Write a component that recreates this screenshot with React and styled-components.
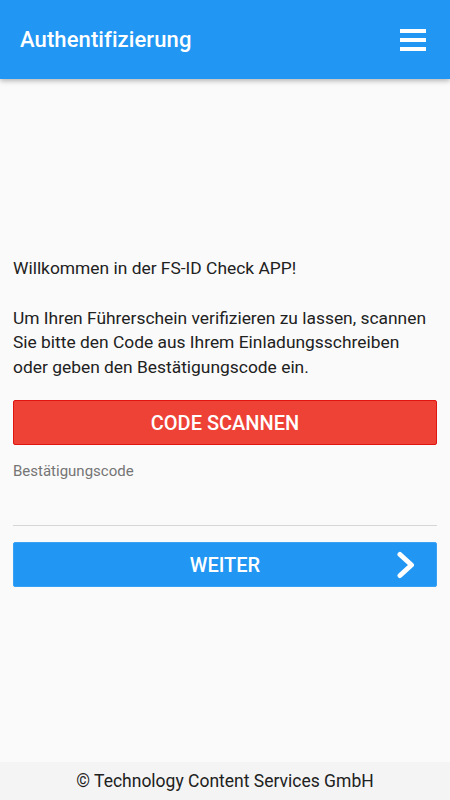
import React from "react";
import styled, { createGlobalStyle } from "styled-components";

const GlobalStyle = createGlobalStyle`
  html, body {
    margin: 0;
    padding: 0;
    background: #fafafa;
  }
  body {
    font-family: Roboto, "Noto Sans", sans-serif;
  }
`;

const Page = styled.div`
  display: flex;
  flex-direction: column;
  height: 800px;
  background: #fafafa;
`;

const Toolbar = styled.header`
  display: flex;
  align-items: center;
  justify-content: space-between;
  height: 79px;
  padding: 0 24px 0 20px;
  background: #2196f3;
  box-shadow: 0 2px 5px rgba(0, 0, 0, 0.28);
  position: relative;
  z-index: 1;
`;

const Title = styled.h1`
  margin: 0;
  color: #fff;
  font-size: 22px;
  font-weight: 500;
  letter-spacing: 0.1px;
`;

const MenuButton = styled.button`
  display: flex;
  flex-direction: column;
  gap: 5px;
  padding: 0;
  border: 0;
  background: transparent;
`;

const MenuBar = styled.span`
  display: block;
  width: 26px;
  height: 4px;
  background: #fff;
`;

const Content = styled.main`
  flex: 1;
  display: flex;
  flex-direction: column;
  padding: 177px 13px 0;
`;

const Text = styled.p`
  margin: 0 0 ${(p) => p.$gap || 0}px;
  color: #212121;
  font-size: 17.4px;
  line-height: 24.5px;
`;

const Button = styled.button`
  position: relative;
  display: flex;
  align-items: center;
  justify-content: center;
  height: 45px;
  width: 100%;
  border: 1px solid ${(p) => p.$border};
  border-radius: 2px;
  background: ${(p) => p.$bg};
  color: #fff;
  font-family: Roboto, "Noto Sans", sans-serif;
  font-size: 20px;
  font-weight: 500;
  text-transform: uppercase;
`;

const Chevron = styled.svg`
  position: absolute;
  right: 19px;
  top: 50%;
  transform: translateY(-50%);
`;

const Field = styled.label`
  display: flex;
  flex-direction: column;
  margin: 16px 0 16px;
`;

const FieldLabel = styled.span`
  color: #757575;
  font-size: 15px;
  line-height: 20px;
`;

const Input = styled.input`
  height: 44px;
  padding: 0;
  border: 0;
  border-bottom: 1px solid #d6d6d6;
  background: transparent;
  outline: none;
  font-size: 17px;
`;

const Footer = styled.footer`
  display: flex;
  align-items: center;
  justify-content: center;
  height: 38px;
  background: #f4f4f4;
  color: #212121;
  font-size: 17.5px;
`;

export default function App() {
  return (
    <>
      <GlobalStyle />
      <Page>
        <Toolbar>
          <Title>Authentifizierung</Title>
          <MenuButton aria-label="Menü">
            <MenuBar />
            <MenuBar />
            <MenuBar />
          </MenuButton>
        </Toolbar>
        <Content>
          <Text $gap={25}>Willkommen in der FS-ID Check APP!</Text>
          <Text $gap={21}>
            Um Ihren Führerschein verifizieren zu lassen, scannen Sie bitte den
            Code aus Ihrem Einladungsschreiben oder geben den Bestätigungscode
            ein.
          </Text>
          <Button $bg="#ee4237" $border="#e0150f">
            Code scannen
          </Button>
          <Field>
            <FieldLabel>Bestätigungscode</FieldLabel>
            <Input />
          </Field>
          <Button $bg="#2196f3" $border="#3aa2f5">
            Weiter
            <Chevron width="21" height="28" viewBox="0 0 21 28">
              <path
                d="M4 3.5 L15.5 14 L4 24.5"
                fill="none"
                stroke="#fff"
                strokeWidth="5"
                strokeLinecap="round"
                strokeLinejoin="round"
              />
            </Chevron>
          </Button>
        </Content>
        <Footer>© Technology Content Services GmbH</Footer>
      </Page>
    </>
  );
}
